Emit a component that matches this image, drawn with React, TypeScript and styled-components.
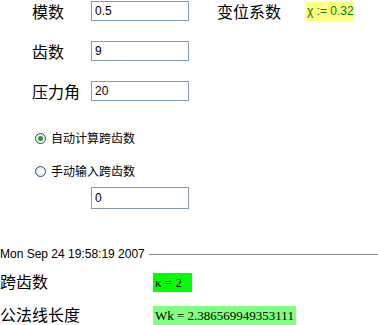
import styled, { createGlobalStyle } from "styled-components";

const Global = createGlobalStyle`
  body {
    margin: 0;
    background: #ffffff;
    font-family: "Liberation Sans", "Noto Sans CJK SC", sans-serif;
  }
`;

const Page = styled.div`
  width: 378px;
  height: 325px;
  overflow: hidden;
  display: flex;
  flex-direction: column;
`;

const Form = styled.div`
  padding: 1px 0 0 32px;
  display: flex;
  flex-direction: column;
`;

const Row = styled.div<{ $gap?: number }>`
  display: flex;
  align-items: center;
  height: 20px;
  margin-bottom: ${(p) => p.$gap ?? 20}px;
`;

const Label = styled.span<{ $w: number }>`
  width: ${(p) => p.$w}px;
  font-size: 16px;
  line-height: 16px;
  color: #000;
  font-family: "Noto Sans CJK SC", sans-serif;
  white-space: nowrap;
`;

const Field = styled.input<{ $h?: number }>`
  box-sizing: border-box;
  width: 98px;
  height: ${(p) => p.$h ?? 20}px;
  border: 1px solid #7f9db9;
  padding: 0 3px;
  font-family: "Liberation Sans", sans-serif;
  font-size: 12px;
  color: #000;
  outline: none;
`;

const Chi = styled.span`
  box-sizing: border-box;
  width: 49px;
  height: 19px;
  background: #ffff80;
  color: #008000;
  font-size: 12px;
  padding-left: 2px;
  display: flex;
  align-items: center;
  white-space: nowrap;
`;

const RadioRow = styled.label<{ $top?: number }>`
  display: flex;
  align-items: center;
  height: 14px;
  margin: ${(p) => p.$top ?? 0}px 0 0 3px;
  gap: 5px;
  font-size: 12px;
  line-height: 14px;
  font-family: "Noto Sans CJK SC", sans-serif;
  color: #000;
`;

const Circle = styled.span<{ $on?: boolean }>`
  box-sizing: border-box;
  width: 11px;
  height: 11px;
  border-radius: 50%;
  border: 1px solid #1c5180;
  background: radial-gradient(circle at 65% 70%, #ffffff 20%, #dcdcd6 100%);
  display: flex;
  align-items: center;
  justify-content: center;
  &::after {
    content: "";
    width: 5px;
    height: 5px;
    border-radius: 50%;
    background: ${(p) => (p.$on ? "#21a121" : "transparent")};
  }
`;

const Results = styled.div`
  display: flex;
  flex-direction: column;
`;

const Stamp = styled.div`
  display: flex;
  align-items: center;
  height: 14px;
  margin-top: 38px;
  font-size: 12px;
  color: #000;
  white-space: nowrap;
  &::after {
    content: "";
    flex: 1;
    margin-left: 4px;
    border-top: 1px solid #808080;
  }
`;

const ResultRow = styled.div<{ $top: number }>`
  display: flex;
  align-items: flex-start;
  height: 19px;
  margin-top: ${(p) => p.$top}px;
`;

const Value = styled.span<{ $bg: string; $w: number }>`
  box-sizing: border-box;
  width: ${(p) => p.$w}px;
  height: 19px;
  background: ${(p) => p.$bg};
  font-family: "Liberation Serif", serif;
  font-size: 13px;
  color: #000;
  padding-left: 2px;
  display: flex;
  align-items: center;
  white-space: nowrap;
`;

export default function App() {
  return (
    <Page>
      <Global />
      <Form>
        <Row>
          <Label $w={59}>模数</Label>
          <Field defaultValue="0.5" />
          <Label $w={88} style={{ marginLeft: 28 }}>变位系数</Label>
          <Chi>χ := 0.32</Chi>
        </Row>
        <Row>
          <Label $w={59}>齿数</Label>
          <Field defaultValue="9" />
        </Row>
        <Row $gap={30}>
          <Label $w={59}>压力角</Label>
          <Field defaultValue="20" />
        </Row>
        <RadioRow>
          <Circle $on />
          自动计算跨齿数
        </RadioRow>
        <RadioRow $top={19}>
          <Circle />
          手动输入跨齿数
        </RadioRow>
        <Row $gap={0} style={{ marginTop: 9, height: 22 }}>
          <Label $w={59} />
          <Field defaultValue="0" $h={22} />
        </Row>
      </Form>
      <Results>
        <Stamp>Mon Sep 24 19:58:19 2007</Stamp>
        <ResultRow $top={12}>
          <Label $w={153}>跨齿数</Label>
          <Value $bg="#00ff00" $w={39}>κ = 2</Value>
        </ResultRow>
        <ResultRow $top={14}>
          <Label $w={153}>公法线长度</Label>
          <Value $bg="#80ff80" $w={143}>Wk = 2.386569949353111</Value>
        </ResultRow>
      </Results>
    </Page>
  );
}
